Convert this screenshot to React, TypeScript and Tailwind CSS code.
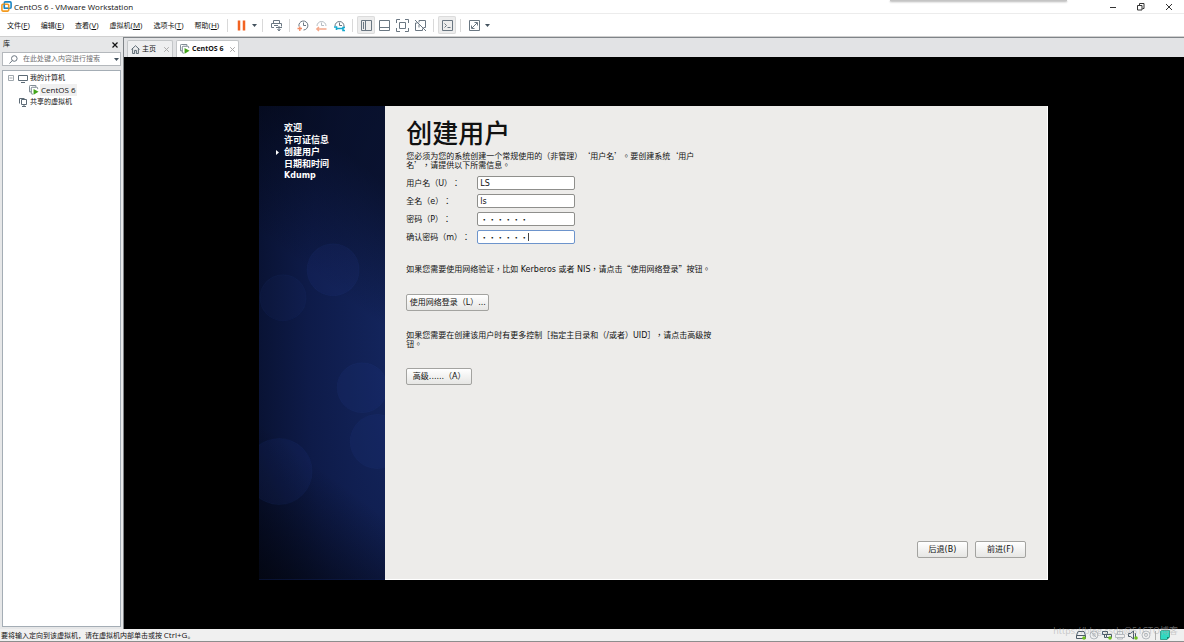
import type { ReactNode } from 'react'

const menus = [
  { label: '文件', key: 'F' },
  { label: '编辑', key: 'E' },
  { label: '查看', key: 'V' },
  { label: '虚拟机', key: 'M' },
  { label: '选项卡', key: 'T' },
  { label: '帮助', key: 'H' },
]

const steps = ['欢迎', '许可证信息', '创建用户', '日期和时间', 'Kdump']

function ToolButton({ label, active, children }: { label: string; active?: boolean; children: ReactNode }) {
  return (
    <button
      aria-label={label}
      className={`flex h-[18px] w-[18px] items-center justify-center rounded-[2px] ${active ? 'bg-[#ededed] ring-1 ring-inset ring-[#dcdcdc]' : ''}`}
    >
      <svg viewBox="0 0 13 13" className="size-[13px]" fill="none" stroke="#6a7782" aria-hidden="true">
        {children}
      </svg>
    </button>
  )
}

function Separator() {
  return <span className="mx-1 h-[13px] w-px bg-[#d9d9d9]" />
}

function Caret() {
  return (
    <button aria-label="更多" className="flex h-[18px] w-2 items-center justify-center">
      <svg viewBox="0 0 5 3" className="h-[3px] w-[5px] fill-[#44525e]">
        <path d="M0 0h5L2.5 3z" />
      </svg>
    </button>
  )
}

function VmIcon() {
  return (
    <svg viewBox="0 0 11 11" className="size-[10px]" fill="none" stroke="#6d7b86" aria-hidden="true">
      <path d="M2.5 7.5h-2v-6a1 1 0 0 1 1-1h6v1.5" />
      <path d="M4.5 10H3.5a1 1 0 0 1-1-1V3.500a1 1 0 0 1 1-1h5a1 1 0 0 1 1 1v1" />
      <path d="M5 4.300v6.400l5.500-3.200z" fill="#43a51b" stroke="none" />
    </svg>
  )
}

function TitleBar() {
  return (
    <header className="relative flex h-[14px] items-center border-b border-[#ececec] bg-white pl-[1px]">
      <svg viewBox="0 0 11 11" className="size-[11px]" fill="none" strokeWidth="1.6" aria-hidden="true">
        <rect x="3.3" y="0.9" width="6.8" height="6.4" rx="1" stroke="#1b86c4" />
        <rect x="0.9" y="3.3" width="6.8" height="6.8" rx="1" stroke="#f39a1f" />
        <path d="M3.3 3.3v4h4.400" stroke="#1b86c4" strokeWidth="1.2" />
      </svg>
      <h1 className="ml-[2px] text-[8px] leading-[12px]">CentOS 6 - VMware Workstation</h1>
      <div className="absolute top-0 right-[117px] h-px w-[177px] bg-[#c4c4c4] shadow-[0_1px_2px_#999]" />
      <div className="ml-auto flex pr-[1px]">
        <button aria-label="最小化" className="flex w-7 justify-center">
          <svg viewBox="0 0 8 8" className="size-2" stroke="#333"><path d="M1 4.500h6" /></svg>
        </button>
        <button aria-label="还原" className="flex w-7 justify-center">
          <svg viewBox="0 0 8 8" className="size-2" stroke="#333" fill="none">
            <path d="M.5 2.500h4.500v4.500h-4.500zM2.500 2V.5h4.500v5H5.500" />
          </svg>
        </button>
        <button aria-label="关闭" className="flex w-7 justify-center">
          <svg viewBox="0 0 8 8" className="size-2" stroke="#333"><path d="M1 1l6 6M7 1L1 7" /></svg>
        </button>
      </div>
    </header>
  )
}

function MenuBar() {
  return (
    <nav className="flex h-[22px] items-center bg-white pl-[7px]">
      <div className="mr-1 flex gap-[11px]">
        {menus.map((m) => (
          <button key={m.key} className="whitespace-nowrap text-[7px] leading-3">
            {m.label}
            <span className="text-[8px]">(<u>{m.key}</u>)</span>
          </button>
        ))}
      </div>
      <Separator />
      <ToolButton label="暂停">
        <path d="M4 1.500v10M9 1.500v10" stroke="#f26322" strokeWidth="2.5" />
      </ToolButton>
      <Caret />
      <Separator />
      <ToolButton label="发送 Ctrl+Alt+Del">
        <path d="M3.500 4.500v-3h6v3M4 8.500H1.500v-4h10v3M4 6.500h4" />
        <path d="M6 8.500h6M9 7v4.500M7.500 10l1.500 2 1.500-2" />
      </ToolButton>
      <Separator />
      <ToolButton label="拍摄快照">
        <path d="M2 7.500a4.500 4.500 0 1 1 4.500 3.500M6.500 3.500v3h2.500" />
        <path d="M.5 9.500h4.500M2.800 7.500v4.500" stroke="#f28a62" strokeWidth="1.3" />
      </ToolButton>
      <ToolButton label="恢复快照">
        <path d="M2 7a4.500 4.500 0 1 1 9 0M6.500 3.500v3h2.500" stroke="#b5bcc2" />
        <path d="M2 10h9.500M4 8L1.800 10 4 12" stroke="#f5a88a" strokeWidth="1.4" />
      </ToolButton>
      <ToolButton label="管理快照">
        <path d="M2 7a4.500 4.500 0 1 1 9 0v1M6.500 3.500v3h2.500" />
        <path d="M3 9.500h7M1 8h2.500v3M12 8.500h-2v3h2" stroke="#14a9cf" strokeWidth="1.6" />
      </ToolButton>
      <Separator />
      <ToolButton label="显示库" active>
        <path d="M1.500 1.500h10v10h-10zM5.500 1.500v10M3.500 3v7" />
      </ToolButton>
      <ToolButton label="缩略图栏">
        <path d="M1.500 1.500h10v10h-10zM1.500 8.500h10" />
      </ToolButton>
      <ToolButton label="全屏">
        <path d="M.5 4V.5h3.500M9 .5h3.500V4M12.500 9v3.500H9M4 12.500H.5V9M3.500 3.500h6v6h-6z" />
      </ToolButton>
      <ToolButton label="Unity">
        <path d="M1 1l11 11M5 3.500V1.500h6.500v7H9.500M3.500 4H1.500v7.500h7V9.500M5 8.500v-3" />
      </ToolButton>
      <Separator />
      <ToolButton label="控制台视图" active>
        <path d="M1.500 1.500h10v10h-10zM3.500 4.500l2 2-2 2M6.500 8.500h3" />
      </ToolButton>
      <Separator />
      <ToolButton label="自由拉伸">
        <path d="M1.500 1.500h10v10h-10zM4 9l5-5M6.500 3.500h3v3M3.500 6.500v3h3" />
      </ToolButton>
      <Caret />
    </nav>
  )
}

function Library() {
  return (
    <aside className="flex w-[123px] shrink-0 flex-col bg-[#e6e7e8] px-[2px] pb-[2px]">
      <div className="flex h-[15px] items-center justify-between px-[1px]">
        <h2 className="text-[7px]">库</h2>
        <button aria-label="关闭库" className="p-[2px]">
          <svg viewBox="0 0 6 6" className="size-[6px]" stroke="#111" strokeWidth="1.2"><path d="M.5.5l5 5M5.500.5l-5 5" /></svg>
        </button>
      </div>
      <label className="flex h-[14px] items-center border border-[#b4b8bc] bg-white pl-[6px]">
        <svg viewBox="0 0 9 9" className="size-[9px] shrink-0" fill="none" stroke="#6b7680" aria-label="搜索">
          <circle cx="5.300" cy="3.500" r="2.800" />
          <path d="M3.300 5.500L.5 8.500" />
        </svg>
        <input
          placeholder="在此处键入内容进行搜索"
          className="ml-[5px] w-0 flex-1 text-[7px] leading-[10px] outline-none placeholder:text-[#6f6f6f]"
        />
        <Caret />
      </label>
      <ul className="mt-1 flex-1 border border-[#a4adb5] bg-white pt-[1px] text-[7px] leading-3">
        <li>
          <div className="flex h-3 items-center pl-[5px]">
            <svg viewBox="0 0 6 6" className="size-[6px]" fill="none" stroke="#a0a8ae"><path d="M.5.5h5v5h-5zM1.500 3h3" /></svg>
            <svg viewBox="0 0 10 9" className="ml-1 h-[9px] w-[10px]" fill="none" stroke="#5d6b76">
              <path d="M.5 1.500h9v5h-9zM3 8.500h4" />
            </svg>
            <span className="ml-[2px]">我的计算机</span>
          </div>
          <ul>
            <li className="flex h-3 items-center pl-[26px]">
              <VmIcon />
              <span className="ml-[1px] bg-[#f0f0f0] px-[1px] text-[8px]">CentOS 6</span>
            </li>
          </ul>
        </li>
        <li className="flex h-3 items-center pl-[15px]">
          <svg viewBox="0 0 10 9" className="h-[9px] w-[10px]" fill="none" stroke="#5d6b76">
            <path d="M1.500 5.500v-5h5M3.500 1.500h5v5h-5zM6 6.500v2M4 8.500h4" />
          </svg>
          <span className="ml-[2px]">共享的虚拟机</span>
        </li>
      </ul>
    </aside>
  )
}

function TabClose() {
  return (
    <button aria-label="关闭标签">
      <svg viewBox="0 0 5 5" className="size-[5px]" stroke="#a9a9a9"><path d="M.2.2l4.600 4.600M4.800.2L.2 4.800" /></svg>
    </button>
  )
}

function Tabs() {
  return (
    <div className="flex h-5 items-end gap-[3px] border-t border-[#7f8488] bg-[#e2e3e5] pl-[3px]">
      <div className="flex h-[17px] w-[46px] items-center rounded-t-[2px] border border-b-0 border-[#c3c6c8] bg-[#eeeff0] px-[3px]">
        <svg viewBox="0 0 10 10" className="size-[9px]" fill="none" stroke="#4f5d68">
          <path d="M.5 5L5 .8 9.500 5M1.800 4v5.500h2.200V6h2v3.500h2.200V4" />
        </svg>
        <span className="mr-auto ml-[2px] text-[7px]">主页</span>
        <TabClose />
      </div>
      <div className="flex h-[17px] w-[63px] items-center rounded-t-[2px] border border-b-0 border-[#c3c6c8] bg-white px-[3px]">
        <VmIcon />
        <span className="mr-auto ml-[2px] whitespace-nowrap text-[7px] font-bold">CentOS 6</span>
        <TabClose />
      </div>
    </div>
  )
}

function GuestSteps() {
  return (
    <div className="relative w-[16%] shrink-0 overflow-hidden bg-[#0c1a48]">
      <svg viewBox="0 0 126 474" preserveAspectRatio="none" className="absolute inset-0 size-full" aria-hidden="true">
        <defs>
          <radialGradient id="glow" cx="1.1" cy=".5" r="1.3">
            <stop offset="0" stopColor="#14265f" />
            <stop offset=".55" stopColor="#0e1b49" />
            <stop offset="1" stopColor="#070f2a" />
          </radialGradient>
          <linearGradient id="shade" x1=".2" y1="0" x2="0" y2="1">
            <stop offset="0" stopColor="#02040c" stopOpacity=".5" />
            <stop offset=".3" stopColor="#02040c" stopOpacity="0" />
            <stop offset=".68" stopColor="#02040c" stopOpacity="0" />
            <stop offset="1" stopColor="#02040c" stopOpacity=".8" />
          </linearGradient>
        </defs>
        <rect width="126" height="474" fill="url(#glow)" />
        <rect width="126" height="474" fill="url(#shade)" />
        <g fill="#2a43a0" fillOpacity=".12" stroke="#4a66c0" strokeOpacity=".06">
          <circle cx="74" cy="164" r="26" />
          <circle cx="24" cy="192" r="23" fillOpacity=".07" />
          <circle cx="103" cy="282" r="25" />
          <circle cx="118" cy="336" r="27" />
          <circle cx="20" cy="366" r="33" />
        </g>
      </svg>
      <ol
        lang="zh-CN"
        className="relative pt-4 pl-[17px] font-['DejaVu_Sans','Noto_Sans_CJK_SC',sans-serif] text-[9px] leading-3 font-bold text-white"
      >
        {steps.map((s) => (
          <li key={s} className="flex h-3 items-center whitespace-nowrap">
            <span className="w-2">
              {s === '创建用户' && (
                <svg viewBox="0 0 3 5" className="h-[5px] w-[3px] fill-white"><path d="M0 0l3 2.500L0 5z" /></svg>
              )}
            </span>
            <span className={s === 'Kdump' ? 'text-[8px]' : ''}>{s}</span>
          </li>
        ))}
      </ol>
    </div>
  )
}

interface FieldProps {
  id: string
  label: string
  value: string
  password?: boolean
  focused?: boolean
}

function Field({ id, label, value, password, focused }: FieldProps) {
  return (
    <div className="flex h-[14px] items-center">
      <label htmlFor={id} className="w-[71px] whitespace-nowrap">{label}</label>
      <div className="relative">
        <input
          id={id}
          type={password ? 'password' : 'text'}
          defaultValue={value}
          className={`block h-[14px] w-[98px] rounded-[2px] border bg-white px-[2px] text-[8px] ${password ? "font-['Noto_Sans_CJK_TC',sans-serif]" : ''} ${focused ? 'border-[#6d94cc]' : 'border-[#8f8f8c]'}`}
        />
        {focused && <span className="absolute top-[3px] left-[51px] h-2 w-px bg-[#444]" />}
      </div>
    </div>
  )
}

function GuestButton({ children, className = '' }: { children: ReactNode; className?: string }) {
  return (
    <button
      lang="zh-CN"
      className={`h-[17px] rounded-[2px] border border-[#a3a3a0] bg-linear-to-b from-white to-[#e6e6e4] text-[8px] whitespace-nowrap ${className}`}
    >
      {children}
    </button>
  )
}

function CreateUser() {
  return (
    <form className="flex min-w-0 flex-1 flex-col border-r border-b border-white bg-[#edecea] pt-[7px] pr-[21px] pb-[21px] pl-[21px] font-['DejaVu_Sans','Noto_Sans_CJK_TC',sans-serif] text-[8px] leading-[9px] [text-spacing-trim:space-all]">
      <h2 lang="zh-CN" className="text-[26px] leading-[38px] font-medium font-['Noto_Sans_CJK_SC',sans-serif]">创建用户</h2>
      {/* quotes stay full width here, so the CJK face goes first */}
      <p className="w-[290px] font-['Noto_Sans_CJK_TC',sans-serif]">
        您必须为您的系统创建一个常规使用的（非管理）‘用户名’。要创建系统‘用户名’，请提供以下所需信息。
      </p>
      <div className="mt-[7px] flex flex-col gap-[4px]">
        <Field id="username" label="用户名（U）：" value="LS" />
        <Field id="fullname" label="全名（e）：" value="ls" />
        <Field id="password" label="密码（P）：" value="123456" password />
        <Field id="confirm" label="确认密码（m）：" value="123456" password focused />
      </div>
      <p className="mt-5 whitespace-nowrap">
        如果您需要使用网络验证，比如 Kerberos 或者 NIS，请点击
        <span className="font-['Noto_Sans_CJK_TC',sans-serif]">“使用网络登录”</span>按钮。
      </p>
      <GuestButton className="mt-5 w-[83px]">使用网络登录（L）...</GuestButton>
      <p className="mt-5 w-[309px]">
        如果您需要在创建该用户时有更多控制［指定主目录和（/或者）UID］，请点击高级按钮。
      </p>
      <GuestButton className="mt-[19px] w-[66px]">高级......（A）</GuestButton>
      <div className="mt-auto flex justify-end gap-[7px]">
        <GuestButton className="w-[51px]">后退(B)</GuestButton>
        <GuestButton className="w-[51px]">前进(F)</GuestButton>
      </div>
    </form>
  )
}

function StatusBar() {
  return (
    <footer className="flex h-[13px] items-center border-b border-[#8d8d8d] bg-[#f0f0f0] pr-[14px] pl-[1px]">
      <p className="text-[7px] leading-3">
        要将输入定向到该虚拟机，请在虚拟机内部单击或按 <span className="text-[8px]">Ctrl+G</span>。
      </p>
      <div className="ml-auto flex items-center gap-[3px]">
        <svg viewBox="0 0 10 10" className="size-[10px]" fill="none" stroke="#4c5b67">
          <path d="M2 1.500h6l1.500 4v3h-9v-3zM.5 5.500h9" />
          <circle cx="8" cy="8" r="1.800" fill="#6fbf1f" stroke="none" />
        </svg>
        <svg viewBox="0 0 10 10" className="size-[10px]" fill="none" stroke="#b5babf">
          <circle cx="5" cy="5" r="4" /><circle cx="5" cy="5" r="1.2" /><path d="M2 2l6 6" />
        </svg>
        <svg viewBox="0 0 10 10" className="size-[10px]" fill="none" stroke="#4c5b67">
          <path d="M.5 1.500h5v3h-5zM4.500 4.500h5v3h-5zM2.500 4.500v3H4" />
          <circle cx="8" cy="8" r="1.800" fill="#6fbf1f" stroke="none" />
        </svg>
        <svg viewBox="0 0 10 10" className="size-[10px]" fill="none" stroke="#b5babf">
          <path d="M2.500 4V1.500h5V4M.5 4.500h9v3h-9zM2.500 7v2h5V7" />
        </svg>
        <svg viewBox="0 0 10 10" className="size-[10px]" fill="none" stroke="#4c5b67">
          <path d="M.5 3.500h2l3-2.500v8l-3-2.500h-2zM7.500 3v4" />
          <circle cx="8" cy="8" r="1.800" fill="#6fbf1f" stroke="none" />
        </svg>
        <svg viewBox="0 0 10 10" className="size-[10px]" fill="none" stroke="#b5babf">
          <circle cx="5" cy="5" r="4" /><circle cx="5" cy="5" r="1.5" />
        </svg>
        <span className="mx-[1px] h-[9px] w-px bg-[#b0b0b0]" />
        <svg viewBox="0 0 10 10" className="size-[10px]">
          <path d="M1.500.5h8v6.500L7 9.500H.5v-8z" fill="#2fd9c0" stroke="#13866f" strokeWidth=".7" />
          <path d="M7 9.500V7h2.500z" fill="#13866f" />
        </svg>
      </div>
    </footer>
  )
}

export default function App() {
  return (
    <div className="relative flex h-screen flex-col overflow-hidden bg-white font-['Open_Sans','Noto_Sans_CJK_SC',sans-serif] text-[#111]">
      <TitleBar />
      <MenuBar />
      <div className="flex min-h-0 flex-1 border-t border-[#d0d0d0]">
        <Library />
        <main className="flex min-w-0 flex-1 flex-col border-l border-[#7f8488]">
          <Tabs />
          <div className="flex flex-1 items-center justify-center bg-black pr-[1px]">
            <div lang="zh-TW" className="flex aspect-[5/3] w-[74.5%] text-[#111]">
              <GuestSteps />
              <CreateUser />
            </div>
          </div>
        </main>
      </div>
      <StatusBar />
      <div className="pointer-events-none absolute right-[6px] bottom-[5px] flex text-[9px] leading-3 whitespace-nowrap text-[#aaa]/60">
        <span>https://blog.csdn</span>
        <span>@51CTO博客</span>
      </div>
    </div>
  )
}
